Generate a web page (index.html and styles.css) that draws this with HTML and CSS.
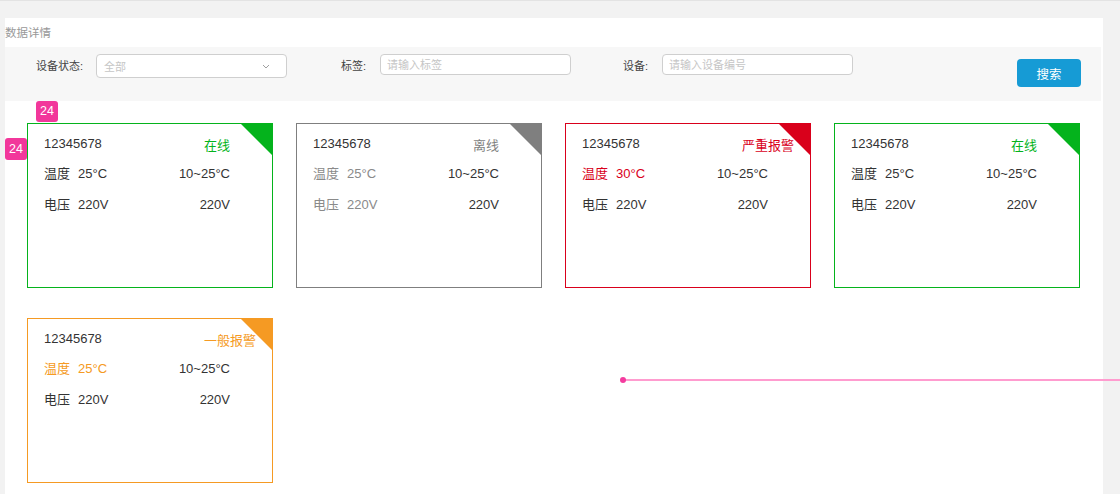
FILE: index.html
```html
<!DOCTYPE html>
<html lang="zh">
<head>
<meta charset="utf-8">
<title>数据详情</title>
<link rel="stylesheet" href="styles.css">
</head>
<body>
<div class="page">
  <div class="panel">
    <div class="title">数据详情</div>
    <div class="filters">
      <div class="field f1">
        <span class="label l1">设备状态:</span>
        <div class="select"><span class="ph">全部</span>
          <svg class="chev" width="8" height="5" viewBox="0 0 8 5"><polyline points="1,1 4,4 7,1" fill="none" stroke="#a0a0a0" stroke-width="1"/></svg>
        </div>
      </div>
      <div class="field f2">
        <span class="label l2">标签:</span>
        <input class="input" type="text" placeholder="请输入标签">
      </div>
      <div class="field f3">
        <span class="label l2">设备:</span>
        <input class="input" type="text" placeholder="请输入设备编号">
      </div>
      <button class="search">搜索</button>
    </div>
    <div class="cards">
      <div class="card online">
        <span class="corner"></span>
        <div class="row"><span class="id">12345678</span><span class="status">在线</span></div>
        <div class="row"><span><span class="lbl">温度</span>25°C</span><span>10~25°C</span></div>
        <div class="row"><span><span class="lbl">电压</span>220V</span><span>220V</span></div>
      </div>
      <div class="card offline">
        <span class="corner"></span>
        <div class="row"><span class="id">12345678</span><span class="status">离线</span></div>
        <div class="row"><span class="muted"><span class="lbl">温度</span>25°C</span><span>10~25°C</span></div>
        <div class="row"><span class="muted"><span class="lbl">电压</span>220V</span><span>220V</span></div>
      </div>
      <div class="card severe">
        <span class="corner"></span>
        <div class="row"><span class="id">12345678</span><span class="status">严重报警</span></div>
        <div class="row"><span class="alert"><span class="lbl">温度</span>30°C</span><span>10~25°C</span></div>
        <div class="row"><span><span class="lbl">电压</span>220V</span><span>220V</span></div>
      </div>
      <div class="card online">
        <span class="corner"></span>
        <div class="row"><span class="id">12345678</span><span class="status">在线</span></div>
        <div class="row"><span><span class="lbl">温度</span>25°C</span><span>10~25°C</span></div>
        <div class="row"><span><span class="lbl">电压</span>220V</span><span>220V</span></div>
      </div>
      <div class="card warning">
        <span class="corner"></span>
        <div class="row"><span class="id">12345678</span><span class="status">一般报警</span></div>
        <div class="row"><span class="alert"><span class="lbl">温度</span>25°C</span><span>10~25°C</span></div>
        <div class="row"><span><span class="lbl">电压</span>220V</span><span>220V</span></div>
      </div>
    </div>
  </div>
  <span class="badge badge-top">24</span>
  <span class="badge badge-left">24</span>
  <span class="guide"><span class="guide-dot"></span></span>
</div>
</body>
</html>
```
FILE: styles.css
```css
html, body {
  margin: 0;
  padding: 0;
}
body {
  background: #f2f2f2;
  font-family: "Liberation Sans", "Noto Sans CJK SC", sans-serif;
  color: #333;
  overflow: hidden;
}
.page {
  position: relative;
  width: 1120px;
  height: 494px;
  border-top: 1px solid #e3e3e3;
  box-sizing: border-box;
  overflow: hidden;
}
.panel {
  margin: 17px 0 0 5px;
  width: 1098px;
  min-height: 490px;
  background: #fff;
}
.title {
  font-size: 11.5px;
  line-height: 14px;
  padding: 8px 0 7px;
  color: #999;
}
.filters {
  height: 54px;
  margin-right: 2px;
  background: #f7f7f7;
  display: flex;
  align-items: flex-start;
  padding-top: 7px;
  box-sizing: border-box;
}
.field {
  display: flex;
  align-items: flex-start;
}
.f1 { margin-left: 31px; }
.f2 { margin-left: 54px; }
.f3 { margin-left: 52px; }
.label {
  font-size: 11px;
  line-height: 25px;
  color: #444;
}
.l1 { width: 60px; }
.l2 { width: 39px; }
.select {
  width: 191px;
  height: 24px;
  box-sizing: border-box;
  border: 1px solid #cfcfcf;
  border-radius: 4px;
  background: #fff;
  display: flex;
  align-items: center;
  justify-content: space-between;
  padding: 0 16px 0 7px;
}
.ph {
  font-size: 11px;
  color: #c6c6c6;
}
.chev {
  display: block;
}
.input {
  width: 191px;
  height: 21px;
  box-sizing: border-box;
  border: 1px solid #cfcfcf;
  border-radius: 4px;
  background: #fff;
  padding: 0 6px;
  margin: 0;
  font-family: inherit;
  font-size: 11px;
  outline: none;
}
.input::placeholder {
  color: #c6c6c6;
}
.search {
  margin: 5px 20px 0 auto;
  width: 64px;
  height: 28px;
  border: none;
  border-radius: 4px;
  background: #169bd5;
  color: #fff;
  font-family: inherit;
  font-size: 12.5px;
  padding: 0;
}
.cards {
  display: grid;
  grid-template-columns: repeat(4, 246px);
  column-gap: 23px;
  row-gap: 30px;
  padding: 22px 22px 0;
}
.card {
  position: relative;
  height: 165px;
  box-sizing: border-box;
  border: 1px solid #333;
  padding: 5px 42px 0 16px;
  font-size: 13px;
}
.corner {
  position: absolute;
  top: 0;
  right: 0;
  width: 0;
  height: 0;
  border-top: 31px solid #333;
  border-left: 31px solid transparent;
}
.row {
  display: flex;
  justify-content: space-between;
  align-items: center;
  height: 30px;
  line-height: 16px;
  white-space: nowrap;
}
.row + .row + .row {
  height: 31px;
  padding-top: 1px;
  box-sizing: border-box;
}
.status {
  width: 26px;
  margin-top: 3px;
  white-space: nowrap;
}
.lbl {
  margin-right: 8px;
}
.online { border-color: #04b31c; }
.online .corner { border-top-color: #04b31c; }
.online .status { color: #04b31c; }
.offline { border-color: #7f7f7f; }
.offline .corner { border-top-color: #7f7f7f; }
.offline .status { color: #7f7f7f; }
.offline .muted { color: #8a8a8a; }
.severe { border-color: #d9001b; }
.severe .corner { border-top-color: #d9001b; }
.severe .status, .severe .alert { color: #d9001b; }
.warning { border-color: #f59a23; }
.warning .corner { border-top-color: #f59a23; }
.warning .status, .warning .alert { color: #f59a23; }
.badge {
  position: absolute;
  width: 22px;
  height: 21px;
  border-radius: 3px;
  background: #f2379b;
  color: #fff;
  font-size: 12.5px;
  line-height: 21px;
  text-align: center;
}
.badge-top { left: 36px; top: 100px; }
.badge-left { left: 5px; top: 137px; height: 22px; line-height: 22px; }
.guide {
  position: absolute;
  left: 623px;
  top: 378px;
  width: 497px;
  height: 2px;
  background: #ff9ccf;
}
.guide-dot {
  position: absolute;
  left: -3px;
  top: -2px;
  width: 6px;
  height: 6px;
  border-radius: 50%;
  background: #f43c9f;
}
```
